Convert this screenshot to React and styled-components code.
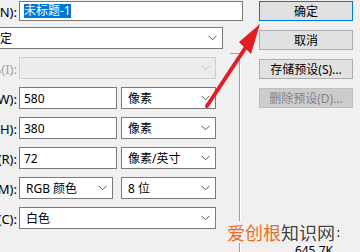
import React from 'react';
import styled, { createGlobalStyle } from 'styled-components';

const GlobalStyle = createGlobalStyle`
  body {
    margin: 0;
    background: #f0f0f0;
  }
`

const Page = styled.div`
  position: relative;
  width: 360px;
  height: 252px;
  overflow: hidden;
  background: #f0f0f0;
  display: flex;
  gap: 16px;
  font-family: "Noto Sans", "Noto Sans CJK SC", sans-serif;
  font-size: 12px;
  color: #000;
`
const Main = styled.div`
  flex: none;
  width: 303px;
  margin-left: -60px;
  padding-top: 1px;
  display: flex;
  flex-direction: column;
`
const Lower = styled.div`
  flex: 1;
  display: flex;
`
const Rows = styled.div`
  flex: none;
  width: 283px;
  padding-top: 6px;
  display: flex;
  flex-direction: column;
  gap: 8px;
`
const Row = styled.div`
  display: flex;
  align-items: center;
  height: ${p => p.$h || 22}px;
`
const Label = styled.div`
  flex: none;
  width: ${p => p.$w || 77}px;
  margin-right: 2px;
  text-align: right;
  white-space: nowrap;
  overflow: hidden;
  font-size: 13px;
  color: ${p => (p.$disabled ? '#a3a3a3' : '#000')};
`
const Input = styled.div`
  flex: none;
  box-sizing: border-box;
  width: ${p => p.$w}px;
  height: 100%;
  display: flex;
  align-items: center;
  padding-left: 4px;
  background: #fff;
  border: 1px solid #7a7a7a;
  white-space: nowrap;
`
const Selected = styled.span`
  background: #0078d7;
  color: #fff;
  line-height: 14px;
`
const SelectBox = styled.div`
  flex: none;
  box-sizing: border-box;
  width: ${p => p.$w}px;
  height: 100%;
  margin-left: ${p => p.$ml || 0}px;
  display: flex;
  align-items: center;
  justify-content: space-between;
  padding: 0 5px 0 6px;
  background: ${p => (p.$disabled ? '#ececec' : '#fff')};
  border: 1px solid ${p => (p.$disabled ? '#cfcfcf' : '#7a7a7a')};
  white-space: nowrap;
`
const Bracket = styled.div`
  flex: none;
  width: 9px;
  margin: 32px 0 0 7px;
  border-top: 1px solid #a0a0a0;
  border-right: 1px solid #a0a0a0;
  box-shadow: 1px 0 0 #ffffff;
`
const Buttons = styled.div`
  flex: none;
  width: 94px;
  padding-top: 1px;
  display: flex;
  flex-direction: column;
  gap: 9px;
`
const Button = styled.div`
  box-sizing: border-box;
  height: 20px;
  display: flex;
  align-items: center;
  justify-content: center;
  background: ${p => (p.$disabled ? '#cccccc' : '#e1e1e1')};
  border: 1px solid ${p => (p.$primary ? '#0078d7' : p.$disabled ? '#bfbfbf' : '#adadad')};
  color: ${p => (p.$disabled ? '#838383' : '#000')};
`
const Info = styled.div`
  margin-top: 107px;
  padding-right: 13px;
  display: flex;
  flex-direction: column;
  align-items: flex-end;
  line-height: 18px;
`
const InfoValue = styled.div`
  margin-right: 7px;
`
const Watermark = styled.div`
  position: absolute;
  left: 225px;
  top: 221px;
  padding: 0 2px;
  background: #f0f0f0;
  font-family: "Noto Sans CJK SC", sans-serif;
  font-size: 18px;
  line-height: 22px;
  white-space: nowrap;
`
const Orange = styled.span`
  color: #ef6b1f;
`
const Grey = styled.span`
  color: #3f3f3f;
  text-shadow: 0 0 2px #fff, 0 0 1px #fff;
`
const Overlay = styled.svg`
  position: absolute;
  left: 0;
  top: 0;
  pointer-events: none;
`

function Chevron({ color = '#555' }) {
  return (
    <svg width="9" height="6" viewBox="0 0 9 6">
      <polyline points="0.5,0.8 4.5,4.8 8.5,0.8" fill="none" stroke={color} strokeWidth="1" />
    </svg>
  )
}

function Select({ w, ml, disabled, children }) {
  return (
    <SelectBox $w={w} $ml={ml} $disabled={disabled}>
      <span>{children}</span>
      <Chevron color={disabled ? '#bdbdbd' : '#555'} />
    </SelectBox>
  )
}

export default function App() {
  return (
    <>
      <GlobalStyle />
      <Page>
        <Main>
          <Row $h={20}>
            <Label>名称(N):</Label>
            <Input $w={224}><Selected>未标题-1</Selected></Input>
          </Row>
          <Lower>
            <Rows>
              <Row>
                <Label $w={39}>文档类型(T):</Label>
                <Select w={242}>自定</Select>
              </Row>
              <Row>
                <Label $disabled>大小(I):</Label>
                <Select w={197} disabled> </Select>
              </Row>
              <Row>
                <Label>宽度(W):</Label>
                <Input $w={98}>580</Input>
                <Select w={95} ml={4}>像素</Select>
              </Row>
              <Row>
                <Label>高度(H):</Label>
                <Input $w={98}>380</Input>
                <Select w={95} ml={4}>像素</Select>
              </Row>
              <Row>
                <Label>分辨率(R):</Label>
                <Input $w={98}>72</Input>
                <Select w={95} ml={4}>像素/英寸</Select>
              </Row>
              <Row>
                <Label>颜色模式(M):</Label>
                <Select w={94}>RGB 颜色</Select>
                <Select w={95} ml={8}>8 位</Select>
              </Row>
              <Row>
                <Label>背景内容(C):</Label>
                <Select w={197}>白色</Select>
              </Row>
            </Rows>
            <Bracket />
          </Lower>
        </Main>
        <Buttons>
          <Button $primary>确定</Button>
          <Button>取消</Button>
          <Button>存储预设(S)...</Button>
          <Button $disabled>删除预设(D)...</Button>
          <Info>
            <div>图像大小:</div>
            <InfoValue>645.7K</InfoValue>
          </Info>
        </Buttons>
        <Overlay width="360" height="252" viewBox="0 0 360 252">
          <line x1="207" y1="106" x2="246" y2="47" stroke="#e31d24" strokeWidth="4" strokeLinecap="round" />
          <polygon points="260,24 239,42 251,54" fill="#e31d24" />
        </Overlay>
        <Watermark>
          <Orange>爱创根</Orange>
          <Grey>知识网</Grey>
        </Watermark>
      </Page>
    </>
  )
}
